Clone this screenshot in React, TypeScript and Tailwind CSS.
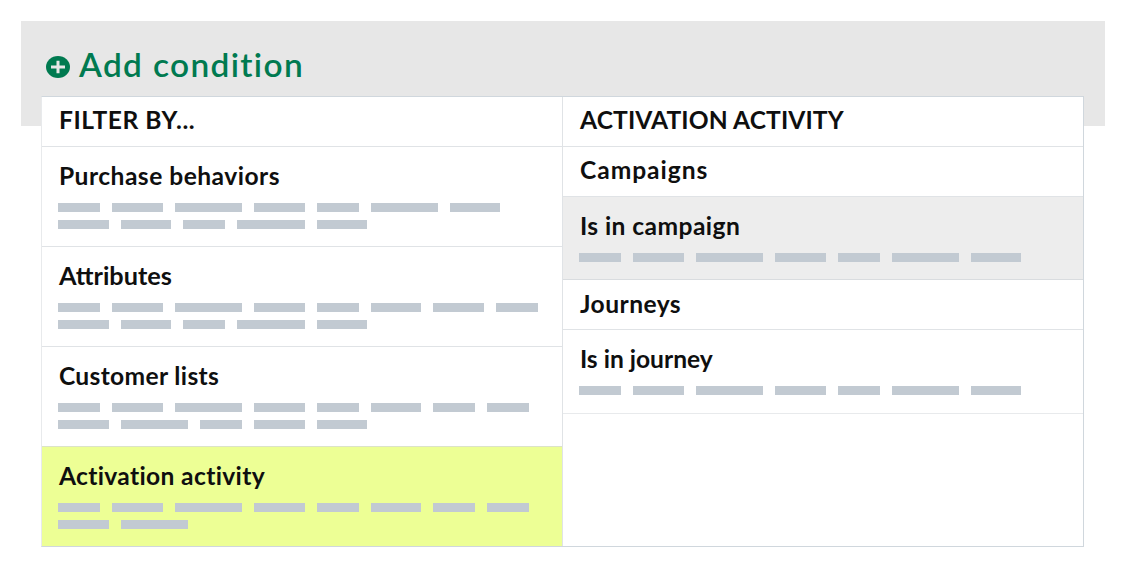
import React from "react";

type Size = "s" | "m" | "l";

const barWidth: Record<Size, string> = {
  s: "w-[42px]",
  m: "w-[50.4px]",
  l: "w-[67.1px]",
};

function Bars({ rows }: { rows: string[] }) {
  return (
    <div className="flex flex-col gap-[7.6px]">
      {rows.map((row, i) => (
        <div key={i} className="flex h-[9px] gap-[12.1px]">
          {row.split("").map((size, j) => (
            <span key={j} className={`shrink-0 bg-[#c2cad2] ${barWidth[size as Size]}`} />
          ))}
        </div>
      ))}
    </div>
  );
}

interface HeadingProps {
  children: string;
  tracking?: string;
  pad?: string;
}

function Heading({ children, tracking = "", pad = "pb-px" }: HeadingProps) {
  return (
    <div className={`flex h-[50px] items-center border-b border-[#e0e3e6] pl-[17px] ${pad}`}>
      <span className={`whitespace-nowrap ${tracking}`}>{children}</span>
    </div>
  );
}

interface ItemProps {
  title: string;
  rows: string[];
  tracking?: string;
  className: string;
}

function Item({ title, rows, tracking = "leading-[30px]", className }: ItemProps) {
  return (
    <div className={`border-b pl-[16.4px] pt-[14px] ${className}`}>
      <div className="mb-[12px] flex h-[30px] pl-[0.5px] leading-[30px]">
        <span className={`whitespace-nowrap ${tracking}`}>{title}</span>
      </div>
      <Bars rows={rows} />
    </div>
  );
}

export default function App() {
  return (
    <main className="h-[572px] w-[1126px] bg-white px-[21px] pt-[21px] font-['Lato',sans-serif] text-[#0f0f0f]">
      <header className="h-[105px] w-[1084px] bg-[#e7e7e7] pl-[25px] pt-[24px]">
        <div className="flex h-10 items-center text-[#007a50]">
          <svg viewBox="0 0 24 22" className="mt-1 mr-[9px] h-[22px] w-6 shrink-0">
            <ellipse cx="12" cy="11" rx="12" ry="11" fill="currentColor" />
            <path d="M12 4.8v12.4M5 11h14" stroke="#e7e7e7" strokeWidth="3" />
          </svg>
          <span className="-mt-[2px] whitespace-nowrap text-[33.4px] font-semibold tracking-[1.35px]">Add condition</span>
        </div>
      </header>
      <section className="relative -mt-[30px] ml-[20px] flex h-[451px] w-[1043px] border border-[#d0d7dd] border-l-[#e8eaec] bg-white text-[24.6px] font-bold">
        <div className="w-[521px] border-r border-[#e0e3e6]">
          <Heading tracking="tracking-[0.55px]" pad="pb-[2px]">FILTER BY...</Heading>
          <Item title="Purchase behaviors" rows={["smlmslm", "mmslm"]} className="h-[100px] border-[#e0e3e6]" tracking="tracking-[0.48px]" />
          <Item title="Attributes" rows={["smlmsmms", "mmslm"]} className="h-[100px] border-[#e0e3e6]" tracking="text-[25.3px] leading-[28px]" />
          <Item title="Customer lists" rows={["smlmsmss", "mlsmm"]} className="h-[100px] border-[#dce3c8]" tracking="tracking-[0.35px]" />
          <Item title="Activation activity" rows={["smlmsmss", "ml"]} className="h-[99px] border-[#edff95] bg-[#edff95]" tracking="tracking-[0.35px]" />
        </div>
        <div className="w-[520px]">
          <Heading tracking="tracking-[0.1px]" pad="pb-[2px]">ACTIVATION ACTIVITY</Heading>
          <Heading tracking="tracking-[0.95px]" pad="pb-[2px]">Campaigns</Heading>
          <Item title="Is in campaign" rows={["smlmslm"]} className="h-[83px] border-[#d9dcdf] bg-[#ededed]" tracking="tracking-[0.43px]" />
          <Heading tracking="tracking-[0.45px]" pad="pb-0">Journeys</Heading>
          <Item title="Is in journey" rows={["smlmslm"]} className="h-[84px] border-[#e8eaec]" />
        </div>
      </section>
    </main>
  );
}
